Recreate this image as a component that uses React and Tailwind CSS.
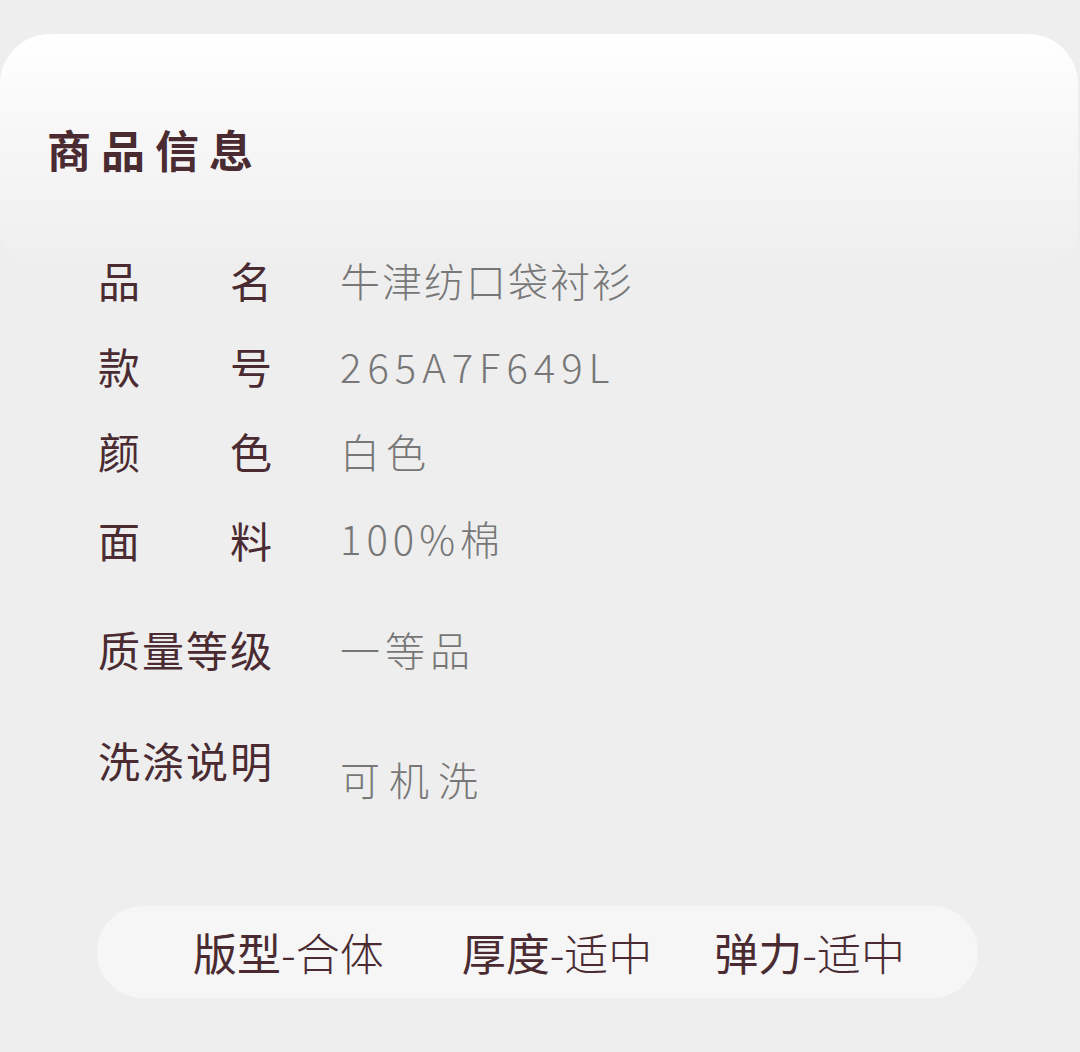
import React from "react";

const font = { fontFamily: '"Noto Sans CJK SC", "Noto Sans", sans-serif' };

function Row({ label, value, className = "", valueClass = "" }) {
  return (
    <div className={`flex items-start pl-[98px] ${className}`}>
      <div className="flex w-[174px] justify-between h-[40px] items-center text-[42px] leading-none text-[#4a2b32]">
        {label.split("").map((c, i) => (
          <span key={i}>{c}</span>
        ))}
      </div>
      <div className={`ml-[68px] h-[40px] flex items-center text-[40px] leading-none font-light text-[#777777] ${valueClass}`}>
        {value}
      </div>
    </div>
  );
}

export default function App() {
  return (
    <div className="w-[1080px] h-[1052px] bg-[#eeeeee] pt-[34px]" style={font}>
      <div className="h-[225px] mr-[2px] rounded-t-[50px] rounded-b-[24px] bg-gradient-to-b from-white via-[#f6f6f6] to-[#efefef] pl-[47px] pt-[93px]">
        <h1 className="h-[44px] flex items-center text-[44px] leading-none font-bold tracking-[10px] text-[#4a2b32]">
          商品信息
        </h1>
      </div>
      <Row label="品名" value="牛津纺口袋衬衫" className="mt-[1px]" valueClass="tracking-[2px]" />
      <Row label="款号" value="265A7F649L" className="mt-[46px]" valueClass="tracking-[6px]" />
      <Row label="颜色" value="白色" className="mt-[45px]" valueClass="tracking-[6px]" />
      <Row label="面料" value="100%棉" className="mt-[49px]" valueClass="-mt-[2px] tracking-[5px]" />
      <Row label="质量等级" value="一等品" className="mt-[69px]" valueClass="tracking-[5px]" />
      <Row label="洗涤说明" value="可机洗" className="mt-[71px]" valueClass="mt-[19px] tracking-[9px]" />
      <div className="mt-[107px] ml-[97px] w-[881px] h-[92px] rounded-full bg-[#f6f6f6] flex items-center pl-[96px] text-[44px] leading-none text-[#4a2b32]">
        <div className="flex items-center">
          <span className="font-normal">版型</span>
          <span className="font-light">-合体</span>
        </div>
        <div className="flex items-center ml-[78px]">
          <span className="font-normal">厚度</span>
          <span className="font-light">-适中</span>
        </div>
        <div className="flex items-center ml-[62px]">
          <span className="font-normal">弹力</span>
          <span className="font-light">-适中</span>
        </div>
      </div>
    </div>
  );
}
